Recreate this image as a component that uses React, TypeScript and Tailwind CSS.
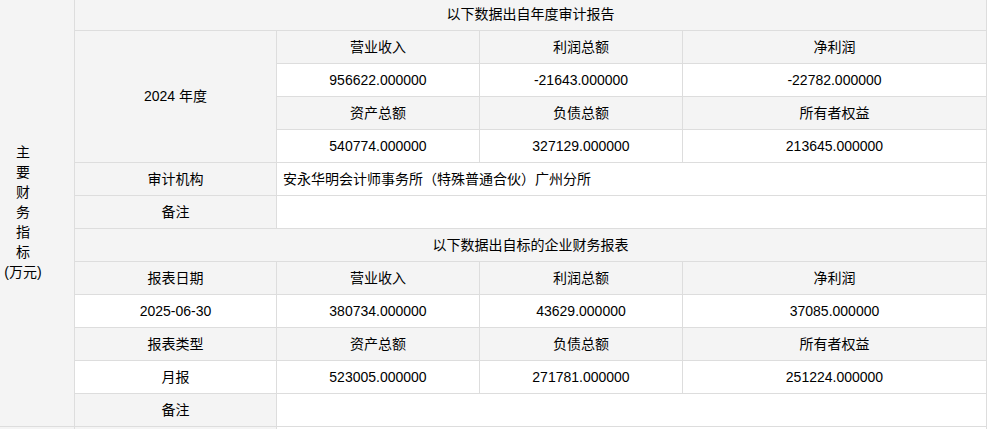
const gray = "bg-[#f4f4f4]";

const Cell = ({
  children,
  className = "",
}: {
  children?: React.ReactNode;
  className?: string;
}) => (
  <div className={`flex items-center justify-center ${className}`}>{children}</div>
);

const annual = {
  heads1: ["营业收入", "利润总额", "净利润"],
  vals1: ["956622.000000", "-21643.000000", "-22782.000000"],
  heads2: ["资产总额", "负债总额", "所有者权益"],
  vals2: ["540774.000000", "327129.000000", "213645.000000"],
};

const report = {
  heads1: ["报表日期", "营业收入", "利润总额", "净利润"],
  vals1: ["2025-06-30", "380734.000000", "43629.000000", "37085.000000"],
  heads2: ["报表类型", "资产总额", "负债总额", "所有者权益"],
  vals2: ["月报", "523005.000000", "271781.000000", "251224.000000"],
};

export default function App() {
  return (
    <div
      className="h-[429px] overflow-hidden bg-white text-[14px] text-black"
      style={{ fontFamily: '"Liberation Sans", "Noto Sans CJK SC", sans-serif' }}
    >
      <div className="-mt-[3px] grid w-[987px] grid-cols-[74px_201px_202px_202px_303px] auto-rows-[32px] gap-px border-y border-r border-[#ddd] bg-[#ddd]">
        {/* left label */}
        <div className={`row-span-13 flex items-center ${gray}`}>
          <div className="w-[46px] text-center leading-[20px]">
            {["主", "要", "财", "务", "指", "标", "(万元)"].map((t) => (
              <div key={t}>{t}</div>
            ))}
          </div>
        </div>

        {/* annual audit */}
        <Cell className={`col-span-4 ${gray}`}>以下数据出自年度审计报告</Cell>
        <Cell className={`row-span-4 ${gray}`}>2024 年度</Cell>
        {annual.heads1.map((h) => (
          <Cell key={h} className={gray}>{h}</Cell>
        ))}
        {annual.vals1.map((v) => (
          <Cell key={v} className="bg-white">{v}</Cell>
        ))}
        {annual.heads2.map((h) => (
          <Cell key={h} className={gray}>{h}</Cell>
        ))}
        {annual.vals2.map((v) => (
          <Cell key={v} className="bg-white">{v}</Cell>
        ))}
        <Cell className={gray}>审计机构</Cell>
        <div className="col-span-3 flex items-center bg-white pl-[6px]">
          安永华明会计师事务所（特殊普通合伙）广州分所
        </div>
        <Cell className={gray}>备注</Cell>
        <div className="col-span-3 bg-white" />

        {/* company statements */}
        <Cell className={`col-span-4 ${gray}`}>以下数据出自标的企业财务报表</Cell>
        {report.heads1.map((h) => (
          <Cell key={h} className={gray}>{h}</Cell>
        ))}
        {report.vals1.map((v) => (
          <Cell key={v} className="bg-white">{v}</Cell>
        ))}
        {report.heads2.map((h) => (
          <Cell key={h} className={gray}>{h}</Cell>
        ))}
        {report.vals2.map((v) => (
          <Cell key={v} className="bg-white">{v}</Cell>
        ))}
        <Cell className={gray}>备注</Cell>
        <div className="col-span-3 bg-white" />

        {/* next row, cut off */}
        <div className={gray} />
        <div className={gray} />
        <div className="col-span-3 bg-white" />
      </div>
    </div>
  );
}
